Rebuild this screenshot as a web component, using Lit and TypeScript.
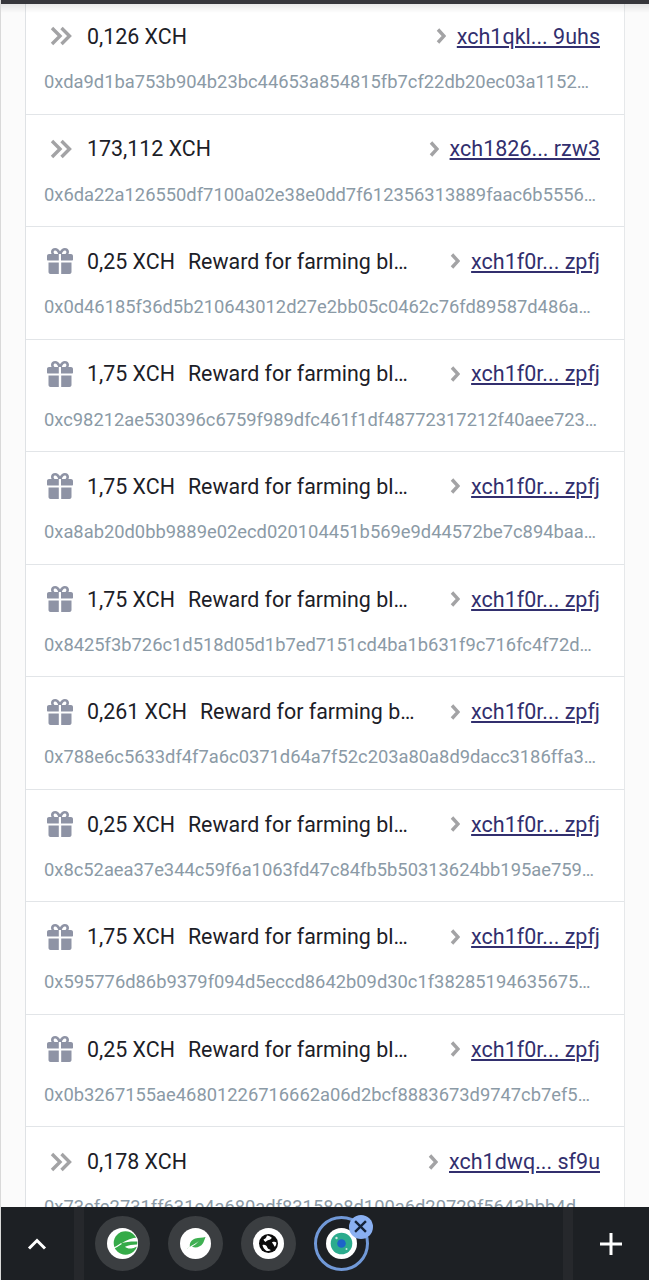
import { LitElement, html, css, svg } from 'lit';
import { customElement } from 'lit/decorators.js';

type Tx = { kind: 'send' | 'reward'; amount: string; to: string; hash: string };

const REWARD = 'Reward for farming block';
const rows: Tx[] = [
  { kind: 'send', amount: '0,126 XCH', to: 'xch1qkl... 9uhs', hash: '0xda9d1ba753b904b23bc44653a854815fb7cf22db20ec03a11523c8e1' },
  { kind: 'send', amount: '173,112 XCH', to: 'xch1826... rzw3', hash: '0x6da22a126550df7100a02e38e0dd7f612356313889faac6b55561f0a' },
  { kind: 'reward', amount: '0,25 XCH', to: 'xch1f0r... zpfj', hash: '0x0d46185f36d5b210643012d27e2bb05c0462c76fd89587d486a4e1c2' },
  { kind: 'reward', amount: '1,75 XCH', to: 'xch1f0r... zpfj', hash: '0xc98212ae530396c6759f989dfc461f1df48772317212f40aee7231b5' },
  { kind: 'reward', amount: '1,75 XCH', to: 'xch1f0r... zpfj', hash: '0xa8ab20d0bb9889e02ecd020104451b569e9d44572be7c894baa3f071' },
  { kind: 'reward', amount: '1,75 XCH', to: 'xch1f0r... zpfj', hash: '0x8425f3b726c1d518d05d1b7ed7151cd4ba1b631f9c716fc4f72d90a6' },
  { kind: 'reward', amount: '0,261 XCH', to: 'xch1f0r... zpfj', hash: '0x788e6c5633df4f7a6c0371d64a7f52c203a80a8d9dacc3186ffa3b27' },
  { kind: 'reward', amount: '0,25 XCH', to: 'xch1f0r... zpfj', hash: '0x8c52aea37e344c59f6a1063fd47c84fb5b50313624bb195ae75921de' },
  { kind: 'reward', amount: '1,75 XCH', to: 'xch1f0r... zpfj', hash: '0x595776d86b9379f094d5eccd8642b09d30c1f382851946356751ac04' },
  { kind: 'reward', amount: '0,25 XCH', to: 'xch1f0r... zpfj', hash: '0x0b3267155ae46801226716662a06d2bcf8883673d9747cb7ef5d80c3' },
  { kind: 'send', amount: '0,178 XCH', to: 'xch1dwq... sf9u', hash: '0x73efe2731ff631e4a680adf83158e8d100a6d20729f5643bbb4da1e9' },
];

const doubleChevron = html`<svg class="ico-double" viewBox="0 0 22 20" fill="none" stroke="#a3a3a5" stroke-width="3.4">
  <path d="M2 2l8 8-8 8M11.500 2l8 8-8 8" />
</svg>`;

const chevron = html`<svg class="chev" viewBox="0 0 10 18" fill="none" stroke="#a3a3a5" stroke-width="3.400">
  <path d="M2 2.500l6 6.500-6 6.500" />
</svg>`;

const gift = html`<svg class="ico-gift" viewBox="0 0 26 26" fill="#8e93a5">
  <path fill-rule="evenodd" d="M8.200 0C5.700 0 4 1.700 4 3.800c0 .8.200 1.500.6 2.200H2C.9 6 0 6.900 0 8v3.500c0 .6.400 1 1 1h10.800V6H14v6.500h11c.6 0 1-.4 1-1V8c0-1.100-.9-2-2-2h-2.600c.4-.7.6-1.400.6-2.200C22 1.700 20.300 0 17.800 0c-2.200 0-3.700 1.500-4.800 3.300C11.900 1.500 10.400 0 8.200 0zm0 2.600c1.300 0 2.300 1.500 3 3.400H8.200C7.300 6 6.600 5 6.600 4.200c0-.9.700-1.600 1.600-1.600zm9.600 0c.9 0 1.600.7 1.600 1.600 0 .8-.7 1.800-1.600 1.800h-3c.7-1.900 1.700-3.400 3-3.400z" />
  <path d="M1.500 14.500h10.300V26H3.500c-1.100 0-2-.9-2-2zM14.200 14.500h10.300V24c0 1.100-.9 2-2 2h-8.300z" />
</svg>`;

const eLogo = svg`<circle cx="18.500" cy="15" r="11.800" fill="#35ab48"/>
  <path fill="#fff" d="M31 9.500c-6 .3-11.500 2.500-16 5.500 3.500-1 9-1.800 16-1.500z"/>
  <path fill="#fff" d="M31 16.500c-4.500-.2-9 .6-13 2.300 1.500 1.500 4.500 2.300 7.500 1.500 1.500-.4 4-1.300 5.500-2.300z"/>
  <path fill="none" stroke="#fff" stroke-width="1.200" d="M5 21c3-1.200 6-3 9.500-5.500"/>`;
const leaf = svg`<path fill="#3fb052" d="M6.500 21c2-1.300 3-2.300 4.500-3.100 3-1.700 6-3 8-5.200-1.800 2.700-4.800 4.500-7 5.800 3.500 2 8.500.5 10.800-3 1.100-1.700 1.700-3.800 2.700-6.500-3 .8-7 .6-10.200 1.600-3.500 1.100-6 4.200-5.400 8z"/>`;
const globe = svg`<circle cx="15.500" cy="15.500" r="9.500" fill="#0b0b0b"/><path fill="#fff" d="M14 7.500c2 .2 3.500 1 4.800 2.300-.4 1.300-1.700 2-3 2.300-1.300.3-2.500.8-3 1.800-1.100-.5-2-1.400-2.300-2.500 1-.3 2.800-.9 3.500-3.900zM9.500 17c1.300-.5 2.800-.2 3.800.7 1.100 1 .9 2.500 2.200 3.200.9.500 1.800.3 2.300 1.400-1 .6-2 .9-3 .8-2.600-.3-4.700-3-5.300-6.100zM19 14.200c1.500-.5 3.400-.6 4.300.2.200 1.600-.4 3.200-1.500 4.400-.8-.5-.8-1.700-1.500-2.500-.5-.7-1.100-1.200-1.300-2.100z"/>`;
const eye = svg`<circle cx="15.500" cy="15.500" r="10.800" fill="#2bab8d"/><circle cx="15.500" cy="15.500" r="4.300" fill="#1d63c9"/><circle cx="10.500" cy="10" r="1.200" fill="#cfe8e0"/><circle cx="20.500" cy="21" r="1" fill="#cfe8e0"/>`;

const tabIcon = (body: unknown) => html`<svg class="tab-logo" viewBox="0 0 31 31">
  <defs><clipPath id="disc"><circle cx="15.500" cy="15.500" r="15.500" /></clipPath></defs>
  <circle cx="15.500" cy="15.500" r="15.500" fill="#fff" />
  <g clip-path="url(#disc)">${body}</g>
</svg>`;

@customElement('app-root')
export class AppRoot extends LitElement {
  static styles = css`
    :host {
      display: block;
      width: 649px;
      height: 1280px;
    }
    .page {
      position: relative;
      display: flex;
      flex-direction: column;
      height: 1280px;
      overflow: hidden;
      background: #fbfbfb;
      font-family: Roboto, sans-serif;
      border-left: 1px solid #d9d9d9;
      box-sizing: border-box;
    }
    /* browser chrome strip and its soft shadow, lies over the list */
    .top-bar {
      position: absolute;
      top: 0;
      left: -1px;
      right: 0;
      height: 4px;
      background: #36363b;
      z-index: 2;
    }
    .top-bar::after {
      content: '';
      position: absolute;
      top: 4px;
      left: 0;
      right: 0;
      height: 9px;
      background: linear-gradient(rgba(0, 0, 0, 0.09), rgba(0, 0, 0, 0));
    }
    .list {
      flex: 1;
      min-height: 0;
      overflow: hidden;
      margin: 2px 24px 0 24px;
      background: #fff;
      border-left: 1px solid #dfe2e5;
      border-right: 1px solid #e6e8ea;
    }
    .row {
      height: 112.55px;
      box-sizing: border-box;
      padding: 0 24px 0 18px;
      border-bottom: 1px solid #e2e5e8;
    }
    .head {
      display: flex;
      align-items: center;
      height: 68.6px;
    }
    .left {
      flex: 1;
      min-width: 0;
      display: flex;
      align-items: center;
      padding-right: 34px;
      font-size: 21.4px;
      color: #1c2027;
    }
    .icon-box {
      flex: none;
      width: 43px;
      display: flex;
      align-items: center;
    }
    .ico-double {
      width: 22px;
      height: 20px;
      margin-left: 6px;
    }
    .ico-gift {
      width: 26px;
      height: 26px;
      margin-left: 3px;
    }
    .amount {
      flex: none;
      white-space: nowrap;
    }
    .memo {
      min-width: 0;
      margin-left: 13px;
      white-space: nowrap;
      overflow: hidden;
      text-overflow: ellipsis;
    }
    .right {
      flex: none;
      display: flex;
      align-items: center;
      gap: 11px;
    }
    .chev {
      width: 10px;
      height: 18px;
    }
    .to {
      font-size: 21.5px;
      color: #322f6e;
      text-decoration: underline;
      text-underline-offset: 2px;
    }
    .hash {
      font-size: 18.33px;
      line-height: 22px;
      margin-top: 0.4px;
      color: #8b9aa6;
      white-space: nowrap;
      overflow: hidden;
      text-overflow: ellipsis;
      padding-right: 2px;
    }
    .tabs {
      position: relative;
      z-index: 1;
      flex: none;
      display: flex;
      align-items: stretch;
      height: 73px;
      margin-left: -1px;
      background: #1d2024;
    }
    .btn {
      flex: none;
      display: flex;
      align-items: center;
      justify-content: center;
    }
    .btn-up {
      width: 74px;
    }
    .btn-add {
      width: 76px;
    }
    .divider {
      flex: none;
      width: 10px;
      background: #26282c;
    }
    .strip {
      flex: 1;
      display: flex;
      align-items: center;
      gap: 18.3px;
      padding: 0 0 0 10.500px;
    }
    .tab {
      position: relative;
      flex: none;
      width: 55px;
      height: 55px;
      box-sizing: border-box;
      border-radius: 50%;
      display: flex;
      align-items: center;
      justify-content: center;
      background: #3b3e41;
    }
    .tab.active {
      background: transparent;
      border: 3px solid #7199d8;
    }
    .tab-logo {
      width: 31px;
      height: 31px;
    }
    .close {
      position: absolute;
      top: -4.5px;
      right: -6.5px;
      width: 24px;
      height: 24px;
      border-radius: 50%;
      background: #8ab0f2;
      display: flex;
      align-items: center;
      justify-content: center;
    }
  `;

  private renderRow(r: Tx) {
    return html`<div class="row">
      <div class="head">
        <div class="left">
          <span class="icon-box">${r.kind === 'reward' ? gift : doubleChevron}</span>
          <span class="amount">${r.amount}</span>
          ${r.kind === 'reward' ? html`<span class="memo">${REWARD}</span>` : ''}
        </div>
        <div class="right">
          ${chevron}
          <span class="to">${r.to}</span>
        </div>
      </div>
      <div class="hash">${r.hash}</div>
    </div>`;
  }

  render() {
    return html`<div class="page">
      <div class="top-bar"></div>
      <div class="list">${rows.map((r) => this.renderRow(r))}</div>
      <div class="tabs">
        <div class="btn btn-up">
          <svg width="20" height="12" viewBox="0 0 20 12" fill="none" stroke="#fff" stroke-width="3"><path d="M2 10.500l8-8 8 8" /></svg>
        </div>
        <div class="divider"></div>
        <div class="strip">
          <div class="tab">${tabIcon(eLogo)}</div>
          <div class="tab">${tabIcon(leaf)}</div>
          <div class="tab">${tabIcon(globe)}</div>
          <div class="tab active">
            ${tabIcon(eye)}
            <span class="close">
              <svg width="13" height="13" viewBox="0 0 12 12" fill="none" stroke="#14233a" stroke-width="2.200"><path d="M1 1l10 10M11 1L1 11" /></svg>
            </span>
          </div>
        </div>
        <div class="divider"></div>
        <div class="btn btn-add">
          <svg width="22" height="22" viewBox="0 0 22 22" fill="none" stroke="#fff" stroke-width="3"><path d="M11 0v22M0 11h22" /></svg>
        </div>
      </div>
    </div>`;
  }
}
